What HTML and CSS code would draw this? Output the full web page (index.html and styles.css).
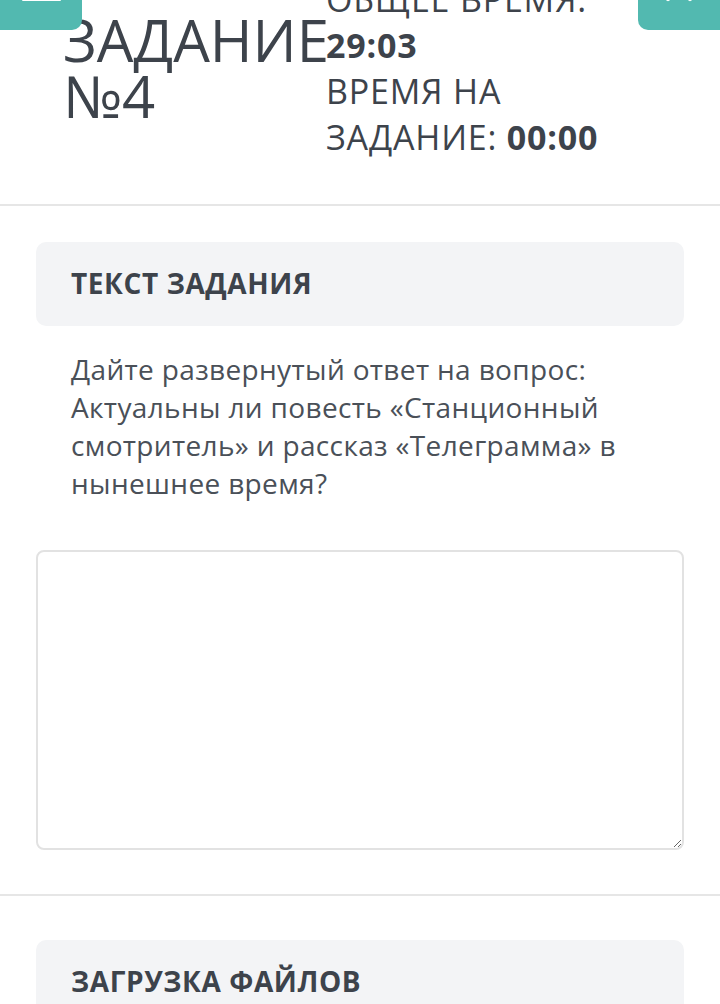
FILE: index.html
```html
<!DOCTYPE html>
<html lang="ru">
<head>
<meta charset="utf-8">
<title>Задание №4</title>
<link rel="stylesheet" href="styles.css">
</head>
<body>
<header class="task-header">
  <h1 class="task-title">ЗАДАНИЕ №4</h1>
  <div class="timers">
    <div>ОБЩЕЕ ВРЕМЯ: <b>29:03</b></div>
    <div>ВРЕМЯ НА ЗАДАНИЕ: <b>00:00</b></div>
  </div>
</header>
<button class="fab fab-left" aria-label="Меню">
  <span class="bar"></span>
</button>
<button class="fab fab-right" aria-label="Закрыть">
  <svg class="x-icon" width="44" height="44" viewBox="0 0 44 44"><path d="M10 9 L32 31 M32 9 L10 31" stroke="#fff" stroke-width="6" stroke-linecap="round" fill="none"/></svg>
</button>
<main class="content">
  <section class="block">
    <div class="card"><h2 class="card-title">ТЕКСТ ЗАДАНИЯ</h2></div>
    <p class="question">Дайте развернутый ответ на вопрос: Актуальны ли повесть «Станционный смотритель» и рассказ «Телеграмма» в нынешнее время?</p>
    <textarea class="answer"></textarea>
  </section>
  <hr class="sep">
  <section class="block">
    <div class="card"><h2 class="card-title">ЗАГРУЗКА ФАЙЛОВ</h2></div>
  </section>
</main>
</body>
</html>
```
FILE: styles.css
```css
html, body {
  margin: 0;
  padding: 0;
  background: #fff;
  overflow: hidden;
}
body {
  font-family: "Open Sans", "Noto Sans", sans-serif;
  color: #3d434b;
  height: 1004px;
}
.task-header {
  display: flex;
  padding: 0 0 44px 63px;
  margin-top: -24px;
  border-bottom: 2px solid #e6e6e6;
}
.task-title {
  margin: 36px 0 0 0;
  width: 263px;
  flex: none;
  font-size: 58px;
  line-height: 56px;
  font-weight: 400;
  color: #3d434b;
}
.timers {
  width: 300px;
  font-size: 34px;
  line-height: 46px;
  letter-spacing: 0.8px;
  color: #3d434b;
}
.timers b { font-weight: 700; }
.fab {
  position: absolute;
  top: -50px;
  width: 92px;
  height: 80px;
  border: 0;
  border-radius: 10px;
  background: #52b9b0;
  padding: 0;
  overflow: hidden;
}
.fab-left { left: -10px; }
.fab-right { right: -10px; }
.bar {
  position: absolute;
  left: 32px;
  top: 47px;
  width: 39px;
  height: 4px;
  background: #fff;
  border-radius: 1px;
}
.x-icon {
  position: absolute;
  left: 20px;
  top: 17px;
}
.content {
  padding: 36px 36px 0;
}
.block { margin: 0; }
.card {
  background: #f3f4f6;
  border-radius: 10px;
  padding: 22px 35px 24px;
}
.card-title {
  margin: 0;
  font-size: 28px;
  line-height: 38px;
  font-weight: 700;
  color: #3d434b;
  letter-spacing: 0.6px;
}
.question {
  margin: 24px 0 48px;
  padding: 0 35px;
  font-size: 28px;
  line-height: 38px;
  letter-spacing: 0.35px;
  color: #4a5058;
}
.answer {
  display: block;
  box-sizing: border-box;
  width: 100%;
  height: 300px;
  margin: 0;
  border: 2px solid #e2e2e2;
  border-radius: 8px;
  background: #fff;
  font-family: inherit;
}
.sep {
  margin: 44px -36px;
  border: 0;
  border-top: 2px solid #e6e6e6;
  height: 0;
}
```
